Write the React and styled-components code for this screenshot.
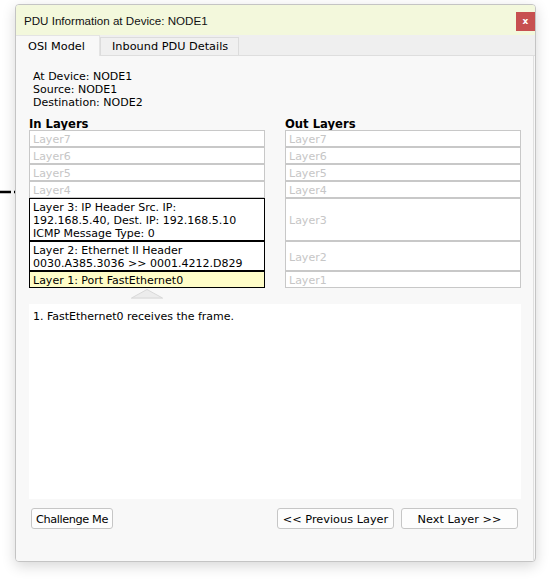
import styled, { createGlobalStyle } from "styled-components"

const GlobalStyle = createGlobalStyle`
  body {
    margin: 0;
    background: #ffffff;
    font-family: "DejaVu Sans", Verdana, sans-serif;
    font-size: 11px;
    color: #000;
  }
`

const Page = styled.div`
  position: relative;
  width: 557px;
  height: 579px;
  padding: 4px 0 0 15px;
  box-sizing: border-box;
`

const CanvasLink = styled.svg`
  position: absolute;
  left: 0;
  top: 190px;
`

const Window = styled.div`
  position: relative;
  width: 521px;
  height: 558px;
  box-sizing: border-box;
  border: 1px solid #c4c4c4;
  border-radius: 4px;
  background: #f8f8f8;
  box-shadow: 0 4px 14px rgba(0, 0, 0, 0.16);
  display: flex;
  flex-direction: column;
  overflow: hidden;
`

const TitleBar = styled.div`
  height: 30px;
  flex: none;
  background: #f3f8dc;
  display: flex;
  align-items: flex-start;
  justify-content: space-between;
`

const Title = styled.span`
  font-family: "Liberation Sans", Arial, sans-serif;
  font-size: 11.6px;
  line-height: 31px;
  padding-left: 8px;
  color: #111;
`

const CloseButton = styled.div`
  width: 19px;
  height: 19px;
  margin-top: 7px;
  background: #c75050;
  color: #fff;
  font-weight: bold;
  font-size: 9px;
  line-height: 18px;
  text-align: center;
`

const TabBar = styled.div`
  height: 20px;
  flex: none;
  background: #efefef;
  border-bottom: 1px solid #dedede;
  display: flex;
  align-items: flex-end;
`

const Tab = styled.div`
  box-sizing: border-box;
  height: ${(p) => (p.$active ? "21px" : "18px")};
  width: ${(p) => p.$width}px;
  margin-bottom: ${(p) => (p.$active ? "-1px" : "0")};
  padding-left: ${(p) => p.$pad}px;
  line-height: ${(p) => (p.$active ? "21px" : "18px")};
  background: ${(p) => (p.$active ? "#f8f8f8" : "#f0f0f0")};
  border: 1px solid ${(p) => (p.$active ? "#e4e4e4" : "#dcdcdc")};
  border-left: ${(p) => (p.$active ? "none" : "1px solid #dcdcdc")};
  border-bottom: none;
  font-size: 11.3px;
  white-space: nowrap;
`

const Panel = styled.div`
  flex: 1;
  margin-right: 1px;
  background: #f8f8f8;
  border-right: 1px solid #e0e0e0;
  padding: 14px 12px 0 13px;
`

const Info = styled.div`
  padding-left: 4px;
  line-height: 13px;
  margin-bottom: 8px;
`

const Layers = styled.div`
  display: grid;
  grid-template-columns: 236px 236px;
  column-gap: 20px;
`

const Heading = styled.div`
  height: 13px;
  padding-top: 1px;
  box-sizing: border-box;
  font-weight: bold;
  font-size: 11.6px;
  line-height: 12px;
  white-space: nowrap;
`

const LayerBox = styled.div`
  box-sizing: border-box;
  border: 1px solid ${(p) => (p.$on ? "#000" : "#c8c8c8")};
  background: ${(p) => (p.$current ? "#fffdc8" : "#fff")};
  color: ${(p) => (p.$on ? "#000" : "#c6c6c6")};
  padding: 2px 3px 0;
  line-height: 13px;
  display: flex;
  align-items: center;
  white-space: pre-line;
`

const ArrowRow = styled.div`
  width: 236px;
  height: 16px;
  display: flex;
  justify-content: center;
  align-items: flex-start;
`

const Description = styled.div`
  height: 195px;
  box-sizing: border-box;
  background: #fff;
  padding: 6px 4px;
  line-height: 13px;
`

const ButtonRow = styled.div`
  margin-top: 9px;
  padding: 0 3px 0 2px;
  display: flex;
  justify-content: space-between;
`

const ButtonGroup = styled.div`
  display: flex;
  gap: 7px;
`

const Button = styled.button`
  width: ${(p) => p.$width}px;
  height: 21px;
  padding: 1px 0 0;
  border: 1px solid #c6c6c6;
  border-radius: 3px;
  background: #fdfdfd;
  font-family: "DejaVu Sans", Verdana, sans-serif;
  font-size: 11.3px;
  color: #000;
  white-space: nowrap;
  letter-spacing: ${(p) => (p.$tight ? "-0.4px" : "0")};
`

const inLayers = [
  { text: "Layer7" },
  { text: "Layer6" },
  { text: "Layer5" },
  { text: "Layer4" },
  { text: "Layer 3: IP Header Src. IP:\n192.168.5.40, Dest. IP: 192.168.5.10\nICMP Message Type: 0", on: true },
  { text: "Layer 2: Ethernet II Header\n0030.A385.3036 >> 0001.4212.D829", on: true },
  { text: "Layer 1: Port FastEthernet0", on: true, current: true },
]

const outLayers = ["Layer7", "Layer6", "Layer5", "Layer4", "Layer3", "Layer2", "Layer1"]

const App = () => {
  return (
    <Page>
      <GlobalStyle />
      <CanvasLink width="16" height="4">
        <line x1="0" y1="2" x2="16" y2="2" stroke="#000" strokeWidth="2.5" strokeDasharray="11 3 2 3" />
      </CanvasLink>
      <Window>
        <TitleBar>
          <Title>PDU Information at Device: NODE1</Title>
          <CloseButton>x</CloseButton>
        </TitleBar>
        <TabBar>
          <Tab $active $width={84} $pad={12}>OSI Model</Tab>
          <Tab $width={139} $pad={11}>Inbound PDU Details</Tab>
        </TabBar>
        <Panel>
          <Info>
            <div>At Device: NODE1</div>
            <div>Source: NODE1</div>
            <div>Destination: NODE2</div>
          </Info>
          <Layers>
            <Heading>In Layers</Heading>
            <Heading>Out Layers</Heading>
            {inLayers.map((l, i) => [
              <LayerBox key={"in" + i} $on={l.on} $current={l.current}>{l.text}</LayerBox>,
              <LayerBox key={"out" + i}>{outLayers[i]}</LayerBox>,
            ])}
          </Layers>
          <ArrowRow>
            <svg width="34" height="11" viewBox="0 0 34 11">
              <polygon points="1.5,10 17,1.5 32.5,10" fill="#ececec" stroke="#d9d9d9" strokeWidth="1" />
              <line x1="1" y1="10.5" x2="33" y2="10.5" stroke="#e4e4e4" strokeWidth="1" />
            </svg>
          </ArrowRow>
          <Description>1. FastEthernet0 receives the frame.</Description>
          <ButtonRow>
            <Button $width={82} $tight>Challenge Me</Button>
            <ButtonGroup>
              <Button $width={117}>&lt;&lt; Previous Layer</Button>
              <Button $width={117}>Next Layer &gt;&gt;</Button>
            </ButtonGroup>
          </ButtonRow>
        </Panel>
      </Window>
    </Page>
  )
}

export default App
